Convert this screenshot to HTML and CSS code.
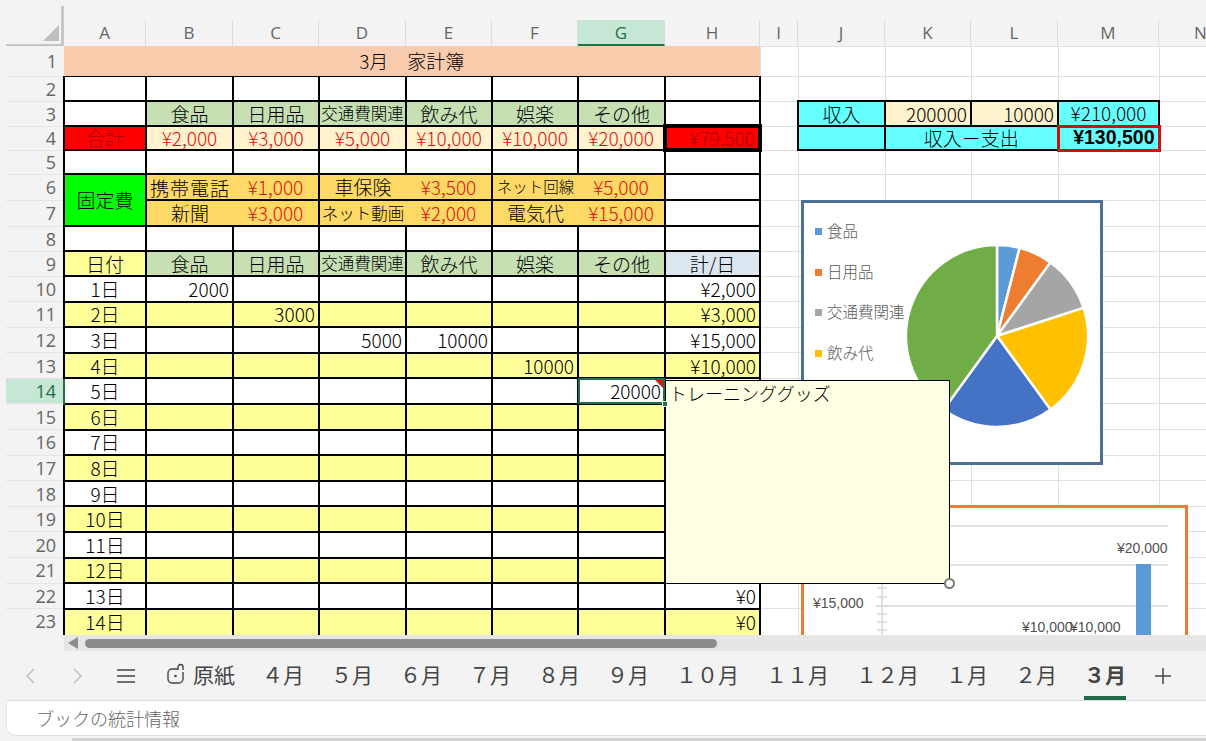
FILE: index.html
```html
<!DOCTYPE html>
<html lang="ja">
<head>
  <meta charset="UTF-8" />
  <title>家計簿 3月</title>
  <link rel="stylesheet" href="styles.css">
</head>
<body>
  <div class="app">
    <div class="sheet">
      <table class="grid">
        <colgroup>
          <col class="c-head"><col class="c-a"><col class="c-b"><col class="c-c"><col class="c-d"><col class="c-e"><col class="c-f"><col class="c-g"><col class="c-h"><col class="c-i"><col class="c-j"><col class="c-k"><col class="c-l"><col class="c-m"><col class="c-n">
        </colgroup>
        <thead>
          <tr class="row-top">
            <th class="corner">
              <svg width="58" height="46" viewBox="0 0 58 46"><path d="M37 41H53V25Z" fill="#bfbfbf"/><path d="M56.5 6V45.5H0" fill="none" stroke="#bfbfbf" stroke-width="2.5"/></svg>
            </th>
            <th><span class="col-name">A</span></th><th><span class="col-name">B</span></th><th><span class="col-name">C</span></th><th><span class="col-name">D</span></th><th><span class="col-name">E</span></th><th><span class="col-name">F</span></th><th><span class="col-name active">G</span></th><th><span class="col-name">H</span></th><th><span class="col-name">I</span></th><th><span class="col-name">J</span></th><th><span class="col-name">K</span></th><th><span class="col-name">L</span></th><th><span class="col-name">M</span></th><th><span class="col-name">N</span></th>
          </tr>
        </thead>
        <tbody>
          <tr class="r1"><th>1</th><td colspan="8" class="title">3月　家計簿</td><td class="g"></td><td class="g"></td><td class="g"></td><td class="g"></td><td class="g"></td><td class="g"></td></tr>
          <tr class="r2"><th>2</th><td></td><td></td><td></td><td></td><td></td><td></td><td></td><td></td><td class="g"></td><td class="g"></td><td class="g"></td><td class="g"></td><td class="g"></td><td class="g"></td></tr>
          <tr class="r3"><th>3</th><td></td><td class="green">食品</td><td class="green">日用品</td><td class="green fit">交通費関連</td><td class="green">飲み代</td><td class="green">娯楽</td><td class="green">その他</td><td></td><td class="g"></td><td class="cyan">収入</td><td class="cream right">200000</td><td class="cream right">10000</td><td class="cyan">¥210,000</td><td class="g"></td></tr>
          <tr class="r4"><th>4</th><td class="total">合計</td><td class="cream red">¥2,000</td><td class="cream red">¥3,000</td><td class="cream red">¥5,000</td><td class="cream red">¥10,000</td><td class="cream red">¥10,000</td><td class="cream red">¥20,000</td><td class="total right heavy">¥79,500</td><td class="g"></td><td class="cyan"></td><td class="cyan" colspan="2">収入－支出</td><td class="cyan right result">¥130,500</td><td class="g"></td></tr>
          <tr class="r5"><th>5</th><td></td><td></td><td></td><td></td><td></td><td></td><td></td><td></td><td class="g"></td><td class="g"></td><td class="g"></td><td class="g"></td><td class="g"></td><td class="g"></td></tr>
          <tr class="r6"><th>6</th><td rowspan="2" class="fixed">固定費</td><td class="orange nr wide">携帯電話</td><td class="orange nl red">¥1,000</td><td class="orange nr">車保険</td><td class="orange nl red">¥3,500</td><td class="orange nr fit-s">ネット回線</td><td class="orange nl red">¥5,000</td><td></td><td class="g"></td><td class="g"></td><td class="g"></td><td class="g"></td><td class="g"></td><td class="g"></td></tr>
          <tr class="r6"><th>7</th><td class="orange nr">新聞</td><td class="orange nl red">¥3,000</td><td class="orange nr fit">ネット動画</td><td class="orange nl red">¥2,000</td><td class="orange nr">電気代</td><td class="orange nl red">¥15,000</td><td></td><td class="g"></td><td class="g"></td><td class="g"></td><td class="g"></td><td class="g"></td><td class="g"></td></tr>
          <tr class="r2"><th>8</th><td></td><td></td><td></td><td></td><td></td><td></td><td></td><td></td><td class="g"></td><td class="g"></td><td class="g"></td><td class="g"></td><td class="g"></td><td class="g"></td></tr>
          <tr class="r3"><th>9</th><td class="yellow">日付</td><td class="green">食品</td><td class="green">日用品</td><td class="green fit">交通費関連</td><td class="green">飲み代</td><td class="green">娯楽</td><td class="green">その他</td><td class="blue">計/日</td><td class="g"></td><td class="g"></td><td class="g"></td><td class="g"></td><td class="g"></td><td class="g"></td></tr>
          <tr class="day"><th>10</th><td>1日</td><td class="right">2000</td><td></td><td></td><td></td><td></td><td></td><td class="right">¥2,000</td><td class="g"></td><td class="g"></td><td class="g"></td><td class="g"></td><td class="g"></td><td class="g"></td></tr>
          <tr class="day alt"><th>11</th><td>2日</td><td></td><td class="right">3000</td><td></td><td></td><td></td><td></td><td class="right">¥3,000</td><td class="g"></td><td class="g"></td><td class="g"></td><td class="g"></td><td class="g"></td><td class="g"></td></tr>
          <tr class="day"><th>12</th><td>3日</td><td></td><td></td><td class="right">5000</td><td class="right">10000</td><td></td><td></td><td class="right">¥15,000</td><td class="g"></td><td class="g"></td><td class="g"></td><td class="g"></td><td class="g"></td><td class="g"></td></tr>
          <tr class="day alt"><th>13</th><td>4日</td><td></td><td></td><td></td><td></td><td class="right">10000</td><td></td><td class="right">¥10,000</td><td class="g"></td><td class="g"></td><td class="g"></td><td class="g"></td><td class="g"></td><td class="g"></td></tr>
          <tr class="day"><th class="active">14</th><td>5日</td><td></td><td></td><td></td><td></td><td></td><td class="right selected">20000<span class="fill-handle"></span></td><td></td><td class="g"></td><td class="g"></td><td class="g"></td><td class="g"></td><td class="g"></td><td class="g"></td></tr>
          <tr class="day alt"><th>15</th><td>6日</td><td></td><td></td><td></td><td></td><td></td><td></td><td></td><td class="g"></td><td class="g"></td><td class="g"></td><td class="g"></td><td class="g"></td><td class="g"></td></tr>
          <tr class="day"><th>16</th><td>7日</td><td></td><td></td><td></td><td></td><td></td><td></td><td></td><td class="g"></td><td class="g"></td><td class="g"></td><td class="g"></td><td class="g"></td><td class="g"></td></tr>
          <tr class="day alt"><th>17</th><td>8日</td><td></td><td></td><td></td><td></td><td></td><td></td><td></td><td class="g"></td><td class="g"></td><td class="g"></td><td class="g"></td><td class="g"></td><td class="g"></td></tr>
          <tr class="day"><th>18</th><td>9日</td><td></td><td></td><td></td><td></td><td></td><td></td><td></td><td class="g"></td><td class="g"></td><td class="g"></td><td class="g"></td><td class="g"></td><td class="g"></td></tr>
          <tr class="day alt"><th>19</th><td>10日</td><td></td><td></td><td></td><td></td><td></td><td></td><td></td><td class="g"></td><td class="g"></td><td class="g"></td><td class="g"></td><td class="g"></td><td class="g"></td></tr>
          <tr class="day"><th>20</th><td>11日</td><td></td><td></td><td></td><td></td><td></td><td></td><td></td><td class="g"></td><td class="g"></td><td class="g"></td><td class="g"></td><td class="g"></td><td class="g"></td></tr>
          <tr class="day alt"><th>21</th><td>12日</td><td></td><td></td><td></td><td></td><td></td><td></td><td></td><td class="g"></td><td class="g"></td><td class="g"></td><td class="g"></td><td class="g"></td><td class="g"></td></tr>
          <tr class="day"><th>22</th><td>13日</td><td></td><td></td><td></td><td></td><td></td><td></td><td class="right">¥0</td><td class="g"></td><td class="g"></td><td class="g"></td><td class="g"></td><td class="g"></td><td class="g"></td></tr>
          <tr class="day alt last"><th>23</th><td>14日</td><td></td><td></td><td></td><td></td><td></td><td></td><td class="right">¥0</td><td class="g"></td><td class="g"></td><td class="g"></td><td class="g"></td><td class="g"></td><td class="g"></td></tr>
        </tbody>
      </table>

      <div class="chart chart-pie">
        <svg width="296" height="259" viewBox="0 0 296 259">
          <rect x="11" y="25" width="7" height="7" fill="#5b9bd5"/><text class="legend" x="23" y="34">食品</text>
          <rect x="11" y="66" width="7" height="7" fill="#ed7d31"/><text class="legend" x="23" y="75">日用品</text>
          <rect x="11" y="106" width="7" height="7" fill="#a5a5a5"/><text class="legend" x="23" y="115">交通費関連</text>
          <rect x="11" y="147" width="7" height="7" fill="#ffc000"/><text class="legend" x="23" y="156">飲み代</text>
          <g transform="translate(93 33)" stroke="#fff" stroke-width="2.5" stroke-linejoin="round">
            <path d="M100 100V9A91 91 0 0 1 122.63 11.86Z" fill="#5b9bd5"/>
            <path d="M100 100L122.63 11.86A91 91 0 0 1 153.49 26.38Z" fill="#ed7d31"/>
            <path d="M100 100L153.49 26.38A91 91 0 0 1 186.55 71.88Z" fill="#a5a5a5"/>
            <path d="M100 100L186.55 71.88A91 91 0 0 1 153.49 173.62Z" fill="#ffc000"/>
            <path d="M100 100L153.49 173.62A91 91 0 0 1 46.51 173.62Z" fill="#4472c4"/>
            <path d="M100 100L46.51 173.62A91 91 0 0 1 100 9Z" fill="#70ad47"/>
          </g>
        </svg>
      </div>

      <div class="chart chart-bar">
        <svg width="381" height="194" viewBox="0 0 381 194">
          <g stroke="#d9d9d9" stroke-width="1.5">
            <path d="M72 18H364M72 57H364M72 98H364"/>
            <path d="M78 70V130"/>
            <path d="M73 80H83M73 89H83M72 98H84M73 106H83M73 114H83M73 122H83"/>
          </g>
          <rect x="332" y="56" width="15" height="80" fill="#5b9bd5"/>
          <text class="axis" x="9" y="100">¥15,000</text>
          <text class="axis" x="313" y="45">¥20,000</text>
          <text class="axis" x="218" y="124">¥10,000</text>
          <text class="axis" x="266" y="124">¥10,000</text>
        </svg>
      </div>

      <div class="comment">トレーニンググッズ<span class="comment-handle"></span></div>
    </div>

    <div class="hscroll">
      <span class="hscroll-left"></span>
      <span class="hscroll-thumb"></span>
    </div>

    <div class="tabs">
      <span class="nav-btn">
        <svg width="12" height="18" viewBox="0 0 12 18"><path d="M10 2L3 9L10 16" fill="none" stroke="#bdbdbd" stroke-width="1.4"/></svg>
      </span>
      <span class="nav-btn">
        <svg width="12" height="18" viewBox="0 0 12 18"><path d="M2 2L9 9L2 16" fill="none" stroke="#bdbdbd" stroke-width="1.4"/></svg>
      </span>
      <span class="nav-btn">
        <svg width="20" height="16" viewBox="0 0 20 16"><path d="M1 2H19M1 8H19M1 14H19" fill="none" stroke="#444" stroke-width="1.6"/></svg>
      </span>
      <div class="tab-list">
        <span class="tab tab-locked">
          <svg width="18" height="21" viewBox="0 0 18 21"><path d="M11 6H5A4 4 0 0 0 1 10V16A4 4 0 0 0 5 20H12A4 4 0 0 0 16 16V9" fill="none" stroke="#444" stroke-width="1.4"/><path d="M11 7V4A2.5 2.5 0 0 1 16 4V7" fill="none" stroke="#444" stroke-width="1.4"/><circle cx="8.5" cy="13" r="1.3" fill="#444"/></svg>
          原紙
        </span>
        <span class="tab">４月</span>
        <span class="tab">５月</span>
        <span class="tab">６月</span>
        <span class="tab">７月</span>
        <span class="tab">８月</span>
        <span class="tab">９月</span>
        <span class="tab">１０月</span>
        <span class="tab">１１月</span>
        <span class="tab">１２月</span>
        <span class="tab">１月</span>
        <span class="tab">２月</span>
        <span class="tab current">３月</span>
      </div>
      <span class="add-tab">
        <svg width="18" height="18" viewBox="0 0 18 18"><path d="M9 1V17M1 9H17" fill="none" stroke="#444" stroke-width="1.5"/></svg>
      </span>
    </div>

    <div class="status">ブックの統計情報</div>
    <div class="page-scroll"></div>
  </div>
</body>
</html>
```

FILE: styles.css
```css
*, *::before, *::after { box-sizing: border-box; }
html, body {
  margin: 0;
  padding: 0;
}
body {
  background-color: #f3f3f3;
  font-family: "Noto Sans CJK JP", sans-serif;
  color: #000;
}
.app {
  width: 1206px;
  height: 741px;
  padding-left: 6px;
  display: flex;
  flex-direction: column;
  overflow: hidden;
}

/* sheet */
.sheet {
  position: relative;
  width: 1200px;
  height: 635px;
  flex: none;
  overflow: hidden;
  background-color: #fff;
}
.grid {
  table-layout: fixed;
  border-collapse: collapse;
  width: 1237px;
}
.c-head { width: 58px; }
.c-a { width: 82px; }
.c-b { width: 87px; }
.c-c { width: 86px; }
.c-d { width: 87px; }
.c-e { width: 86px; }
.c-f { width: 86px; }
.c-g { width: 87px; }
.c-h { width: 95px; }
.c-i { width: 38px; }
.c-j { width: 87px; }
.c-k { width: 86px; }
.c-l { width: 87px; }
.c-m { width: 101px; }
.c-n { width: 84px; }

.grid thead th {
  height: 46px;
  padding: 0;
  vertical-align: bottom;
  background-color: #f3f3f3;
  border: none;
}
.corner svg {
  display: block;
}
.grid th.corner {
  vertical-align: top;
}
.col-name {
  display: block;
  height: 26px;
  line-height: 26px;
  border-right: 1px solid #dcdcdc;
  text-align: center;
  font-family: "Open Sans", sans-serif;
  font-size: 17px;
  font-weight: 400;
  color: #666;
}
.col-name.active {
  background-color: #c6e7d5;
  border-bottom: 2px solid #1e7145;
  color: #1e7145;
}
.grid tbody th {
  padding: 0 7px 0 0;
  text-align: right;
  background-color: #f3f3f3;
  font-family: "Open Sans", sans-serif;
  font-size: 18px;
  font-weight: 400;
  line-height: 1;
  color: #666;
  border-bottom: 1px solid #e4e4e4;
}
.grid tbody th.active {
  background-color: #c6e7d5;
  color: #1e7145;
  border-right: 2px solid #1e7145;
}

.grid td {
  height: 25.6px;
  padding: 0 3px 1px;
  border: 2px solid #000;
  text-align: center;
  white-space: nowrap;
  font-size: 19px;
  font-weight: 300;
  line-height: 1;
}
.grid td.g { border: 1px solid #dfdfdf; }

.r1 td, .r1 th { height: 30px; }
.r2 td, .r2 th { height: 25px; }
.r3 td, .r3 th { height: 25px; }
.r4 td, .r4 th { height: 24px; }
.r5 td, .r5 th { height: 24px; }
.r6 td, .r6 th { height: 26px; }
.grid .last td, .grid .last th { height: 28px; padding-bottom: 3px; }

.grid td.title {
  background-color: #f8cbad;
  border-top: none;
  border-left: none;
  border-right: none;
  border-bottom: 1px solid #000;
  font-size: 19px;
}
.r2 td { border-top-width: 1px; }
.r2 td.g { border-top-width: 1px; }

.green { background-color: #c6e0b4; }
.cream { background-color: #fff2cc; }
.orange { background-color: #ffd966; }
.yellow { background-color: #ffff99; }
.blue { background-color: #dce6f1; }
.cyan { background-color: #66ffff; }
.fixed { background-color: #00ff00; }
.total { background-color: #ff0000; color: #a80000; }
.red { color: #e01010; }
.day.alt td:not(.g) { background-color: #ffff99; }

.grid td.right { text-align: right; }
.grid td.fit { font-size: 16.5px; padding: 0; }
.grid td.fit-s { font-size: 15.5px; padding: 0; }
.grid td.wide { letter-spacing: 1px; padding: 0; }
.grid td.nr { border-right: none; }
.grid td.nl { border-left: none; }
.grid td.heavy { border: 4px solid #000; }
.grid td.result {
  border: 3px solid #d00f0f;
  font-family: "Liberation Sans", sans-serif;
  font-size: 19.5px;
  font-weight: bold;
}

.grid td.selected {
  position: relative;
}
.selected::before {
  content: "";
  position: absolute;
  inset: -1px;
  border: 2px solid #1e7145;
}
.selected::after {
  content: "";
  position: absolute;
  top: 1px;
  right: 1px;
  border-top: 8px solid #e81010;
  border-left: 8px solid transparent;
}
.fill-handle {
  position: absolute;
  right: -4px;
  bottom: -4px;
  width: 6px;
  height: 6px;
  background-color: #1e7145;
  border: 1px solid #fff;
  z-index: 3;
}

/* charts and note lie over the grid */
.chart {
  position: absolute;
  z-index: 1;
  background-color: #fff;
  border-style: solid;
  border-width: 3px;
}
.chart svg { display: block; }
.chart-pie {
  left: 795px;
  top: 200px;
  width: 302px;
  height: 265px;
  border-color: #4a7098;
}
.chart-bar {
  left: 795px;
  top: 505px;
  width: 387px;
  height: 200px;
  border-color: #e67e3a;
}
.legend {
  font-size: 15.5px;
  font-weight: 300;
  fill: #595959;
}
.axis {
  font-family: "Liberation Sans", sans-serif;
  font-size: 14px;
  fill: #505050;
}
.comment {
  position: absolute;
  z-index: 2;
  left: 659px;
  top: 380px;
  width: 285px;
  height: 204px;
  padding: 1px 3px;
  background-color: #ffffe3;
  border: 1px solid #000;
  font-size: 18px;
  font-weight: 300;
  line-height: 22px;
}
.comment-handle {
  position: absolute;
  right: -6px;
  bottom: -6px;
  width: 11px;
  height: 11px;
  border: 2px solid #777;
  border-radius: 50%;
  background-color: #fff;
}

/* scrollbar and tabs */
.hscroll {
  height: 16px;
  flex: none;
  margin-left: 58px;
  background-color: #e6e6e6;
  display: flex;
  align-items: center;
  gap: 7px;
}
.hscroll-left {
  margin-left: 4px;
  border-top: 6px solid transparent;
  border-bottom: 6px solid transparent;
  border-right: 10px solid #8c8c8c;
}
.hscroll-thumb {
  width: 632px;
  height: 9px;
  border-radius: 5px;
  background-color: #8c8c8c;
}
.tabs {
  height: 50px;
  flex: none;
  display: flex;
  align-items: stretch;
  border-bottom: 1px solid #dedede;
  background-color: #f3f3f3;
}
.nav-btn {
  width: 48px;
  display: flex;
  align-items: center;
  justify-content: center;
}
.tab-list {
  display: flex;
  gap: 27px;
  padding-left: 17px;
}
.tab {
  display: flex;
  align-items: center;
  gap: 8px;
  border-bottom: 4px solid transparent;
  font-size: 21px;
  color: #444;
  white-space: nowrap;
}
.tab.current {
  font-weight: bold;
  border-bottom-color: #1e6b45;
}
.add-tab {
  margin-left: 28px;
  display: flex;
  align-items: center;
}
.status {
  height: 35px;
  flex: none;
  padding-left: 29px;
  background-color: #fff;
  border-bottom: 1px solid #dedede;
  border-left: 1px solid #e8e8e8;
  border-bottom-left-radius: 10px;
  font-size: 18px;
  font-weight: 300;
  line-height: 35px;
  color: #666;
}
.page-scroll {
  height: 3px;
  margin: 2px 0 0 66px;
  background-color: #d4d4d4;
}
```
